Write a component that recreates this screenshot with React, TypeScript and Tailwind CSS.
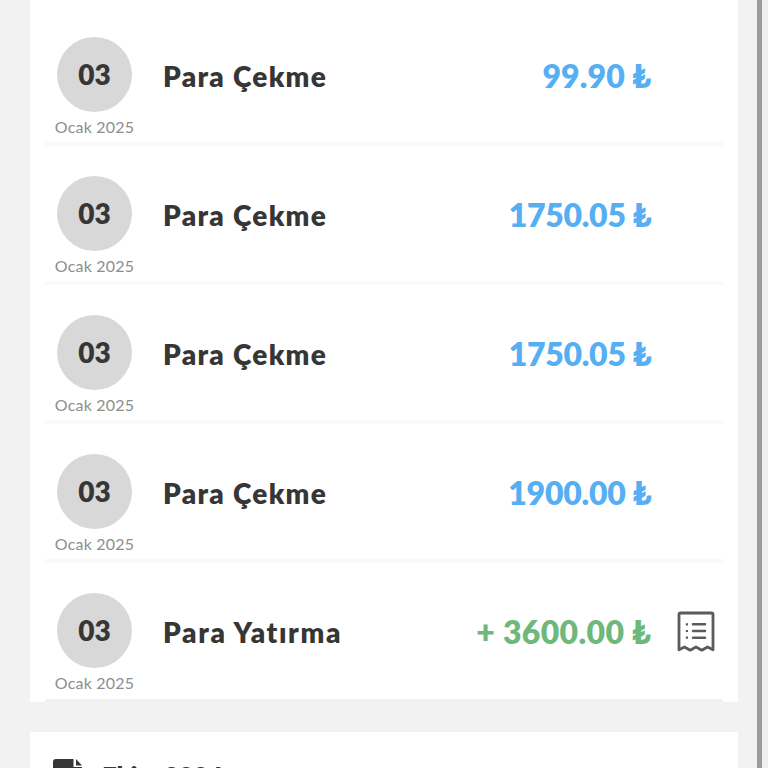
import React from "react";

type Row = { title: string; amount: string; titleClass: string; amountClass: string; deposit?: boolean };

const rows: Row[] = [
  { title: "Para Çekme", amount: "99.90 ₺", titleClass: "tracking-[1.3px]", amountClass: "tracking-[0.1px]" },
  { title: "Para Çekme", amount: "1750.05 ₺", titleClass: "tracking-[1.3px]", amountClass: "tracking-[-0.3px]" },
  { title: "Para Çekme", amount: "1750.05 ₺", titleClass: "tracking-[1.3px]", amountClass: "tracking-[-0.3px]" },
  { title: "Para Çekme", amount: "1900.00 ₺", titleClass: "tracking-[1.3px]", amountClass: "tracking-[-0.25px]" },
  { title: "Para Yatırma", amount: "+ 3600.00 ₺", titleClass: "tracking-[1.65px]", amountClass: "tracking-[0.35px]", deposit: true },
];

function ReceiptIcon() {
  return (
    <svg className="h-[42px] w-[38px]" viewBox="0 0 38 42" fill="none" stroke="#5b5b5b">
      <path d="M2 38.8V3.5Q2 2 3.5 2H34.5Q36 2 36 3.5V38.8L30.5 36L24.8 39.2L19 36L13.2 39.2L7.5 36Z" strokeWidth="2.8" strokeLinejoin="round" />
      <path d="M16 13.3H28M16 20H28M16 26.7H28" strokeWidth="2.5" strokeLinecap="round" />
      <path d="M8.8 13.3H11M8.8 20H11M8.8 26.7H11" strokeWidth="2.2" />
    </svg>
  );
}

export default function App() {
  return (
    <div className="flex h-[768px] w-[768px] overflow-hidden bg-[#f2f2f2] font-['Lato','Open_Sans',sans-serif]">
      <div className="flex w-[757px] shrink-0 flex-col gap-[30px] pl-[30px]">
        <div className="h-[702px] w-[708px] shrink-0 bg-white px-[15px] pt-[7px]">
          {rows.map((row, i) => (
            <div key={i} className="flex h-[139px] border-b-4 border-[#f9f9f9] last:border-b-[3px] last:border-[#f2f2f2]">
              <div className="flex w-[99px] shrink-0 flex-col items-center pt-[30px]">
                <div className="flex size-[75px] items-center justify-center rounded-full bg-[#d8d8d8] pb-[2px] text-[28px] leading-none font-extrabold text-[#363636]">03</div>
                <div className="mt-[6px] text-[16px] leading-[18px] tracking-[0.2px] whitespace-nowrap text-[#8e8e8e]">Ocak 2025</div>
              </div>
              <div className={`ml-[19px] pt-[52px] text-[28px] leading-[34px] font-extrabold whitespace-nowrap text-[#363636] ${row.titleClass}`}>{row.title}</div>
              <div className={`ml-auto pt-[51px] text-[32px] leading-[36px] font-extrabold whitespace-nowrap ${row.amountClass} ${row.deposit ? "text-[#6fb87c]" : "text-[#56aef3]"}`}>{row.amount}</div>
              <div className="ml-[26px] w-[46px] shrink-0 pt-[48px]">{row.deposit && <ReceiptIcon />}</div>
            </div>
          ))}
        </div>
        <div className="flex h-[80px] w-[708px] shrink-0 bg-white pt-[27px] pl-[23px]">
          <svg className="h-[36px] w-[29px]" viewBox="0 0 29 36" fill="#363636">
            <path d="M3 0H20.5V8H29V36H0V3Q0 0 3 0ZM23 0L29 6.5H23Z" />
          </svg>
          <div className="ml-[20px] text-[26px] leading-[34px] font-extrabold tracking-[-0.5px] text-[#363636]">Ekim 2024</div>
        </div>
      </div>
      <div className="w-[5px] bg-[#9b9b9b]" />
      <div className="flex-1 bg-[#f0f0f0]" />
    </div>
  );
}
